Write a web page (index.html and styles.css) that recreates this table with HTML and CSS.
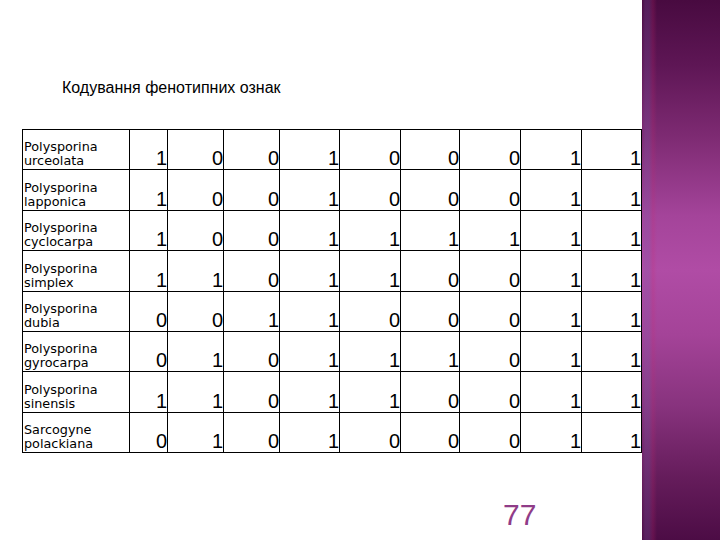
FILE: index.html
```html
<!DOCTYPE html>
<html lang="uk">
<head>
<meta charset="utf-8">
<title>Кодування фенотипних ознак</title>
<link rel="stylesheet" href="styles.css">
</head>
<body>
<div class="slide">
  <main class="main">
    <h1 class="title">Кодування фенотипних ознак</h1>
    <table class="grid">
      <colgroup>
        <col class="c-name"><col class="c1"><col class="c2"><col class="c3"><col class="c4"><col class="c5"><col class="c6"><col class="c7"><col class="c8"><col class="c9">
      </colgroup>
      <tbody>
        <tr><td class="name">Polysporina<br>urceolata</td><td>1</td><td>0</td><td>0</td><td>1</td><td>0</td><td>0</td><td>0</td><td>1</td><td>1</td></tr>
        <tr><td class="name">Polysporina<br>lapponica</td><td>1</td><td>0</td><td>0</td><td>1</td><td>0</td><td>0</td><td>0</td><td>1</td><td>1</td></tr>
        <tr><td class="name">Polysporina<br>cyclocarpa</td><td>1</td><td>0</td><td>0</td><td>1</td><td>1</td><td>1</td><td>1</td><td>1</td><td>1</td></tr>
        <tr><td class="name">Polysporina<br>simplex</td><td>1</td><td>1</td><td>0</td><td>1</td><td>1</td><td>0</td><td>0</td><td>1</td><td>1</td></tr>
        <tr><td class="name">Polysporina<br>dubia</td><td>0</td><td>0</td><td>1</td><td>1</td><td>0</td><td>0</td><td>0</td><td>1</td><td>1</td></tr>
        <tr><td class="name">Polysporina<br>gyrocarpa</td><td>0</td><td>1</td><td>0</td><td>1</td><td>1</td><td>1</td><td>0</td><td>1</td><td>1</td></tr>
        <tr><td class="name">Polysporina<br>sinensis</td><td>1</td><td>1</td><td>0</td><td>1</td><td>1</td><td>0</td><td>0</td><td>1</td><td>1</td></tr>
        <tr><td class="name">Sarcogyne<br>polackiana</td><td>0</td><td>1</td><td>0</td><td>1</td><td>0</td><td>0</td><td>0</td><td>1</td><td>1</td></tr>
      </tbody>
    </table>
    <div class="page-num">77</div>
  </main>
  <aside class="panel"></aside>
</div>
</body>
</html>
```

FILE: styles.css
```css
html, body {
  margin: 0;
  padding: 0;
  background: #ffffff;
}

.slide {
  display: flex;
  width: 720px;
  height: 540px;
  overflow: hidden;
}

.main {
  width: 642px;
  flex: none;
  padding-left: 22px;
  box-sizing: border-box;
}

.title {
  margin: 0;
  padding: 79px 0 0 40px;
  height: 129px;
  box-sizing: border-box;
  font-family: "Liberation Sans", Arial, sans-serif;
  font-weight: normal;
  font-size: 16px;
  line-height: 18px;
  color: #000000;
}

.grid {
  border-collapse: collapse;
  table-layout: fixed;
  width: 619px;
  font-family: "Liberation Sans", Arial, sans-serif;
  color: #000000;
}

.c-name { width: 107px; }
.c1 { width: 38px; }
.c2 { width: 56px; }
.c3 { width: 56px; }
.c4 { width: 60px; }
.c5 { width: 61px; }
.c6 { width: 59px; }
.c7 { width: 61px; }
.c8 { width: 61px; }
.c9 { width: 60px; }

.grid tr {
  height: 40.4px;
}

.grid td {
  border: 1px solid #000000;
  padding: 0 0 1px 0;
  vertical-align: bottom;
  text-align: right;
  font-size: 20px;
  line-height: 20px;
}

.grid td.name {
  text-align: left;
  font-family: "DejaVu Sans", Verdana, sans-serif;
  font-size: 12.8px;
  line-height: 14px;
  padding: 0 0 1px 1px;
  white-space: nowrap;
  overflow: hidden;
}

.page-num {
  margin-top: 47px;
  padding-left: 481px;
  font-family: "Liberation Sans", Arial, sans-serif;
  font-size: 30px;
  line-height: 30px;
  color: #903c88;
}

.panel {
  flex: none;
  width: 78px;
  height: 540px;
  background:
    linear-gradient(90deg,
      rgba(120, 90, 170, 0.0) 0px,
      rgba(120, 90, 170, 0.25) 3px,
      rgba(120, 90, 170, 0.25) 7px,
      rgba(200, 40, 110, 0.2) 11px,
      rgba(200, 40, 110, 0.0) 15px),
    linear-gradient(180deg,
      #480a40 0%,
      #5e1655 12%,
      #7d2a72 25%,
      #a4449a 40%,
      #b04ca5 50%,
      #a44398 62%,
      #88337e 75%,
      #661d5c 88%,
      #4c0c45 100%);
}
```
